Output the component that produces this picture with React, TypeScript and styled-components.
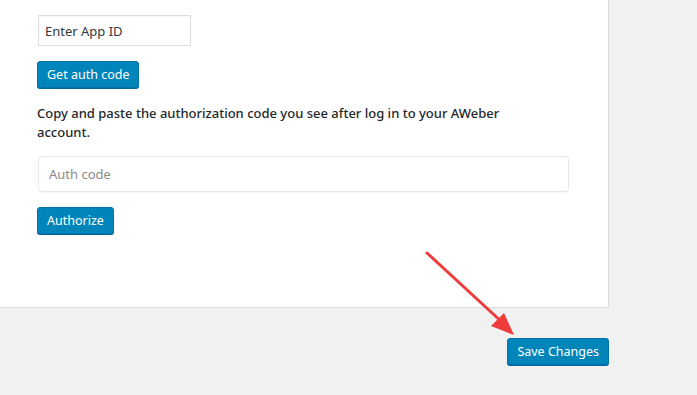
import styled, { createGlobalStyle } from "styled-components";

const GlobalStyle = createGlobalStyle`
  html, body {
    margin: 0;
    padding: 0;
    background: #f1f1f1;
    font-family: "Noto Sans", "Open Sans", sans-serif;
    color: #23282d;
  }
`;

const Page = styled.div`
  position: relative;
  width: 697px;
  height: 395px;
  overflow: hidden;
`;

const Panel = styled.div`
  box-sizing: border-box;
  width: 609px;
  height: 308px;
  background: #fff;
  border-right: 1px solid #dcdcdc;
  border-bottom: 1px solid #dcdcdc;
  padding: 15px 0 0 37px;
  display: flex;
  flex-direction: column;
  align-items: flex-start;
`;

const TextInput = styled.input<{ $wide?: boolean }>`
  box-sizing: border-box;
  margin: 0 0 0 1px;
  width: ${({ $wide }) => ($wide ? "531px" : "153px")};
  height: ${({ $wide }) => ($wide ? "36px" : "31px")};
  padding: ${({ $wide }) => ($wide ? "0 10px" : "0 6px")};
  border: 1px solid ${({ $wide }) => ($wide ? "#e6e6e6" : "#dddddd")};
  border-radius: ${({ $wide }) => ($wide ? "4px" : "0")};
  box-shadow: ${({ $wide }) => ($wide ? "0 1px 1px rgba(0,0,0,0.04)" : "inset 0 1px 2px rgba(0,0,0,0.05)")};
  font-family: inherit;
  font-size: 13px;
  color: #32373c;
  outline: none;
  &::placeholder {
    color: #8a8a8a;
  }
`;

const Button = styled.button<{ $gap?: number }>`
  box-sizing: border-box;
  height: 27px;
  margin-top: ${({ $gap }) => $gap ?? 0}px;
  padding: 0 9px;
  background: #0085ba;
  border: 1px solid #0073aa;
  border-radius: 3px;
  box-shadow: 0 1px 0 #006799;
  color: #fff;
  font-family: inherit;
  font-size: 12.5px;
  line-height: 25px;
  cursor: pointer;
`;

const Help = styled.p`
  margin: 16px 0 14px 0;
  width: 500px;
  font-size: 13px;
  font-weight: 500;
  line-height: 19px;
  color: #23282d;
`;

const Footer = styled.div`
  width: 609px;
  display: flex;
  justify-content: flex-end;
  padding-top: 30px;
`;

const Arrow = styled.svg`
  position: absolute;
  left: 0;
  top: 0;
  pointer-events: none;
`;

export default function App() {
  return (
    <Page>
      <GlobalStyle />
      <Panel>
        <TextInput defaultValue="Enter App ID" />
        <Button $gap={15}>Get auth code</Button>
        <Help>
          Copy and paste the authorization code you see after log in to your
          AWeber account.
        </Help>
        <TextInput $wide placeholder="Auth code" />
        <Button $gap={15}>Authorize</Button>
      </Panel>
      <Footer>
        <Button>Save Changes</Button>
      </Footer>
      <Arrow width="697" height="395" viewBox="0 0 697 395">
        <line x1="427" y1="253" x2="504" y2="324" stroke="#ee3b3b" strokeWidth="3" strokeLinecap="round" />
        <polygon points="514,335 491,326 504,313" fill="#ee3b3b" />
      </Arrow>
    </Page>
  );
}
